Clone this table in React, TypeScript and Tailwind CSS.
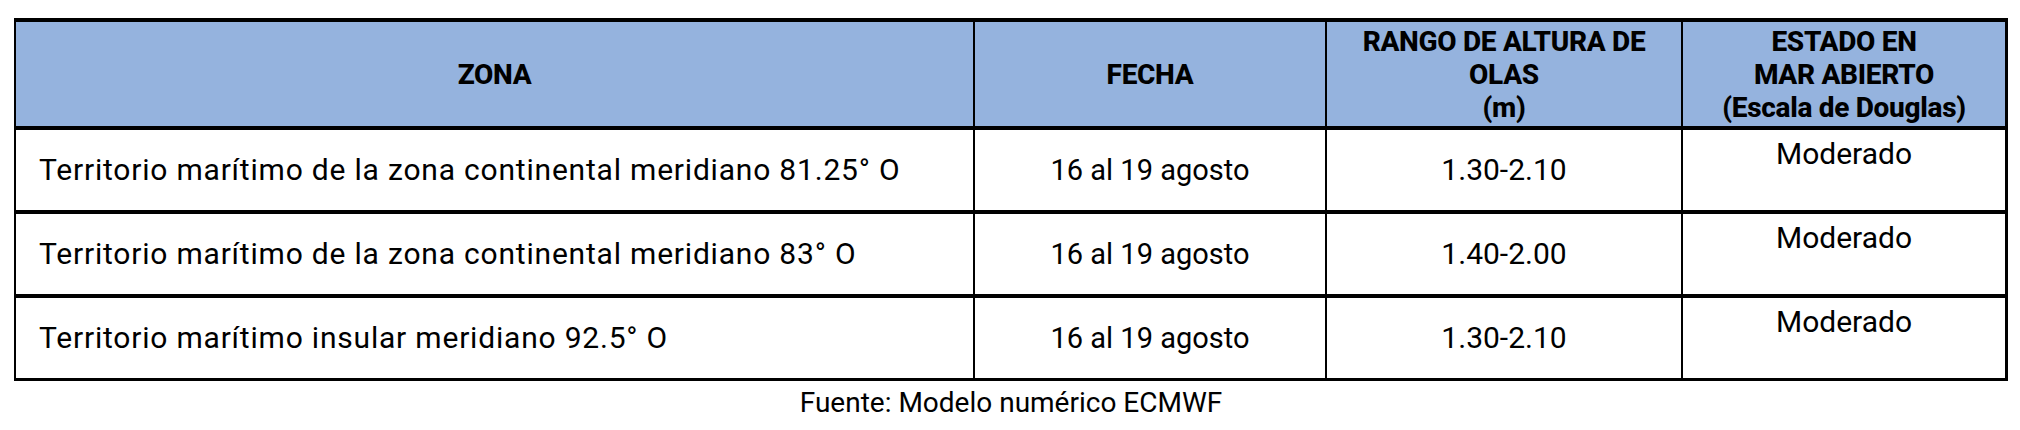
import React from 'react';

interface Fila {
  zona: string;
  fecha: string;
  rango: string;
  estado: string;
}

const filas: Fila[] = [
  {
    zona: 'Territorio marítimo de la zona continental meridiano 81.25° O',
    fecha: '16 al 19 agosto',
    rango: '1.30-2.10',
    estado: 'Moderado'
  },
  {
    zona: 'Territorio marítimo de la zona continental meridiano 83° O',
    fecha: '16 al 19 agosto',
    rango: '1.40-2.00',
    estado: 'Moderado'
  },
  {
    zona: 'Territorio marítimo insular meridiano 92.5° O',
    fecha: '16 al 19 agosto',
    rango: '1.30-2.10',
    estado: 'Moderado'
  }
];

const cols = 'grid grid-cols-[959px_352px_356px_1fr]';

const App: React.FC = () => {
  return (
    <div className="w-[2020px] h-[430px] bg-white text-black font-['Roboto',sans-serif]">
      <div className="pt-[18px] pl-[14px]">
        <div className="w-[1994px] border-t-4 border-l-2 border-r-[3px] border-b-[3px] border-black">
          {/* encabezado */}
          <div className={`${cols} h-[108px] bg-[#95b3de] border-b-4 border-black font-extrabold text-[28px] leading-[33px] tracking-[-0.3px]`}>
            <div className="border-r-2 border-black flex items-center justify-center">ZONA</div>
            <div className="border-r-2 border-black flex items-center justify-center">FECHA</div>
            <div className="border-r-2 border-black flex flex-col items-center justify-center text-center">
              <span>RANGO DE ALTURA DE</span>
              <span>OLAS</span>
              <span>(m)</span>
            </div>
            <div className="flex flex-col items-center justify-center text-center">
              <span>ESTADO EN</span>
              <span>MAR ABIERTO</span>
              <span>(Escala de Douglas)</span>
            </div>
          </div>

          {filas.map((f, i) => (
            <div
              key={i}
              className={`${cols} text-[30px] leading-[32px] ${i < filas.length - 1 ? 'h-[84px] border-b-4 border-black' : 'h-[80px]'}`}
            >
              <div className="border-r-2 border-black flex items-center pl-[23px] tracking-[0.8px]">{f.zona}</div>
              <div className="border-r-2 border-black flex items-center justify-center text-[29px]">{f.fecha}</div>
              <div className="border-r-2 border-black flex items-center justify-center">{f.rango}</div>
              <div className="flex justify-center pt-[8px]">{f.estado}</div>
            </div>
          ))}
        </div>
        <div className="w-[1994px] text-center text-[28px] leading-[32px] mt-[6px]">
          Fuente: Modelo numérico ECMWF
        </div>
      </div>
    </div>
  );
};

export default App;
